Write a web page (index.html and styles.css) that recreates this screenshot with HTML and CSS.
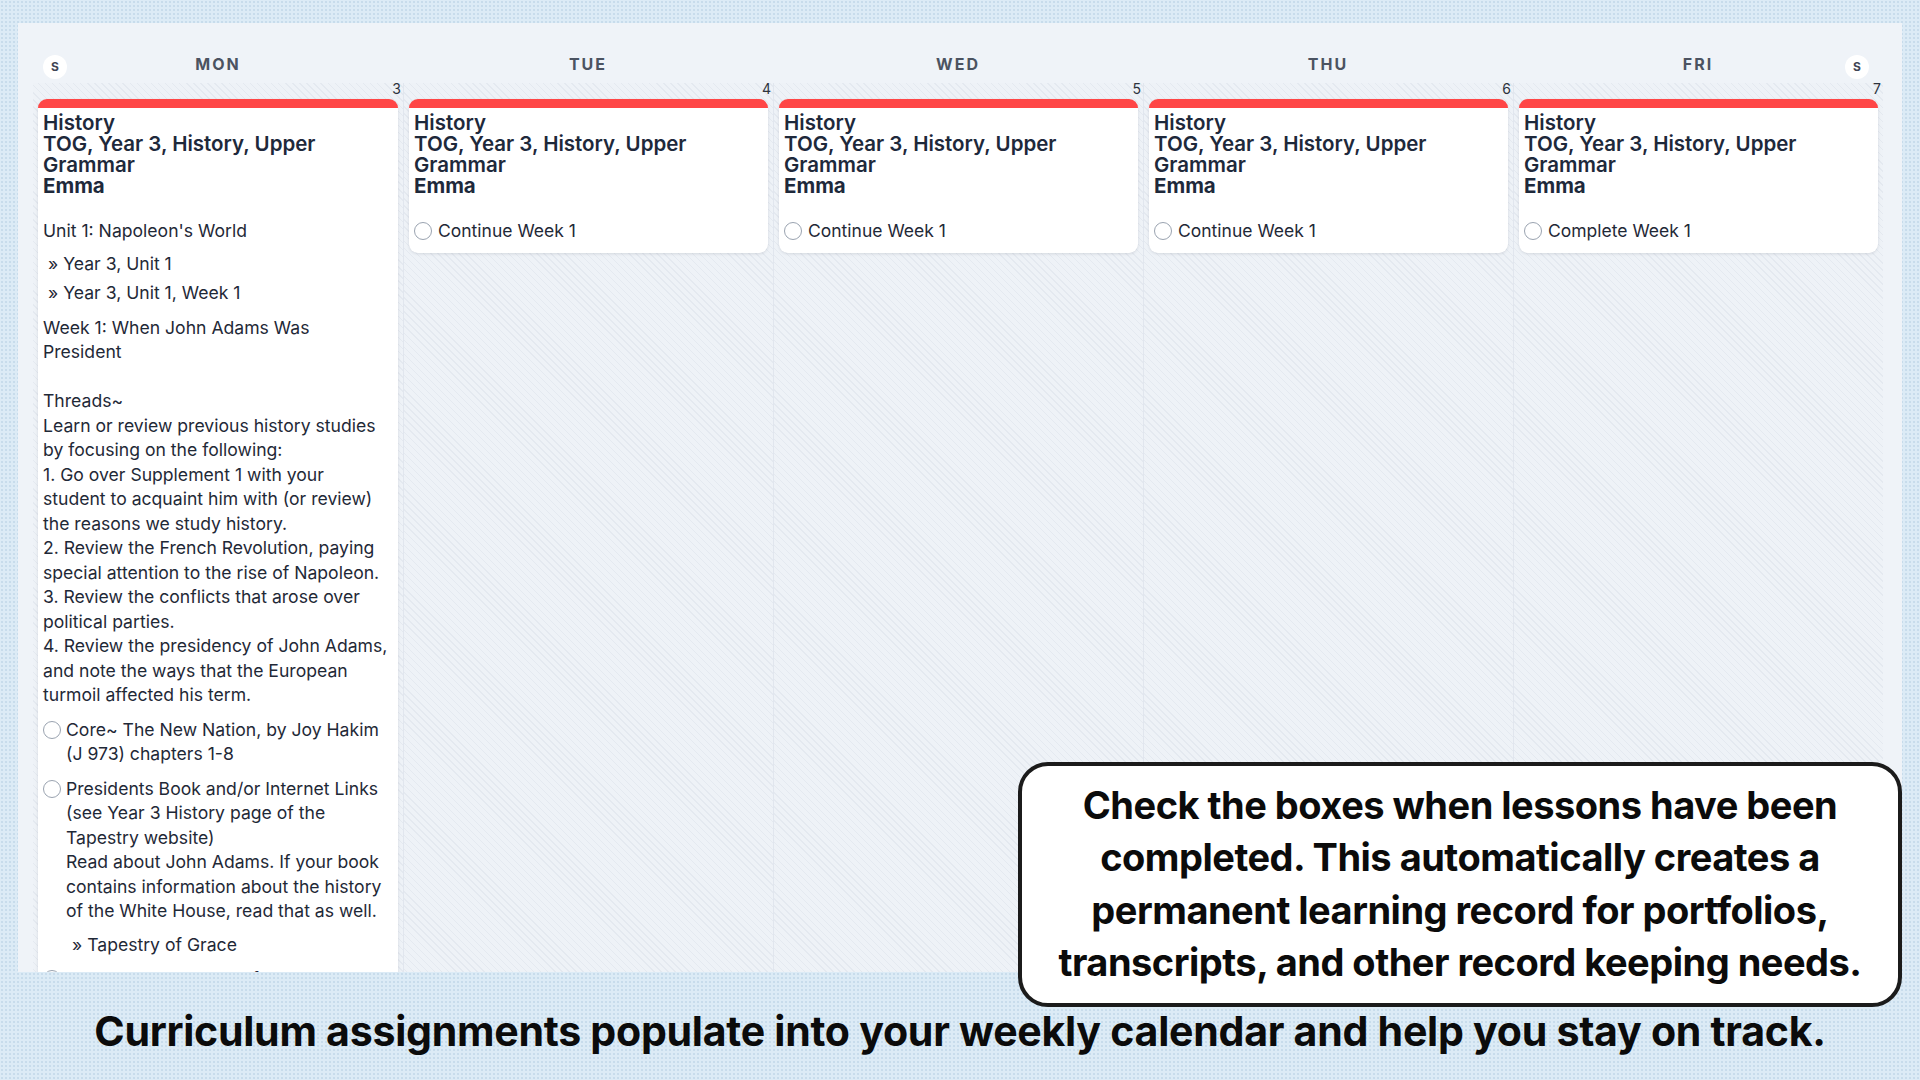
FILE: index.html
```html
<!DOCTYPE html>
<html lang="en">
<head>
  <meta charset="UTF-8" />
  <meta name="viewport" content="width=device-width, initial-scale=1.0" />
  <title>Weekly Planner</title>
  <link rel="stylesheet" href="styles.css">
</head>
<body>

  <!-- Week view -->
  <div class="calendar">
    <div class="week-head">
      <div class="day-name">MON<span class="weekend-btn left">S</span></div>
      <div class="day-name">TUE</div>
      <div class="day-name">WED</div>
      <div class="day-name">THU</div>
      <div class="day-name">FRI<span class="weekend-btn right">S</span></div>
    </div>

    <div class="week-body">
      <div class="day">
        <div class="date">3</div>
        <div class="card">
          <div class="card-title">History<br>TOG, Year 3, History, Upper Grammar<br><span class="student">Emma</span></div>
          <div class="card-body">
            <p class="unit">Unit 1: Napoleon's World</p>
            <p class="link">&raquo; Year 3, Unit 1</p>
            <p class="link next">&raquo; Year 3, Unit 1, Week 1</p>
            <p class="notes">Week 1: When John Adams Was President<br><br>Threads~<br>Learn or review previous history studies by focusing on the following:<br>1. Go over Supplement 1 with your student to acquaint him with (or review) the reasons we study history.<br>2. Review the French Revolution, paying special attention to the rise of Napoleon.<br>3. Review the conflicts that arose over political parties.<br>4. Review the presidency of John Adams, and note the ways that the European turmoil affected his term.</p>
            <div class="task">
              <span class="check"></span>
              <span>Core~ The New Nation, by Joy Hakim (J 973) chapters 1-8</span>
            </div>
            <div class="task">
              <span class="check"></span>
              <span>Presidents Book and/or Internet Links (see Year 3 History page of the Tapestry website)<br>Read about John Adams. If your book contains information about the history of the White House, read that as well.</span>
            </div>
            <p class="link sub">&raquo; Tapestry of Grace</p>
            <div class="task">
              <span class="check"></span>
              <span>In-Depth~ The Story of Napoleon Bonaparte</span>
            </div>
          </div>
        </div>
      </div>

      <div class="day">
        <div class="date">4</div>
        <div class="card">
          <div class="card-title">History<br>TOG, Year 3, History, Upper Grammar<br><span class="student">Emma</span></div>
          <div class="task short"><span class="check"></span><span>Continue Week 1</span></div>
        </div>
      </div>

      <div class="day">
        <div class="date">5</div>
        <div class="card">
          <div class="card-title">History<br>TOG, Year 3, History, Upper Grammar<br><span class="student">Emma</span></div>
          <div class="task short"><span class="check"></span><span>Continue Week 1</span></div>
        </div>
      </div>

      <div class="day">
        <div class="date">6</div>
        <div class="card">
          <div class="card-title">History<br>TOG, Year 3, History, Upper Grammar<br><span class="student">Emma</span></div>
          <div class="task short"><span class="check"></span><span>Continue Week 1</span></div>
        </div>
      </div>

      <div class="day">
        <div class="date">7</div>
        <div class="card">
          <div class="card-title">History<br>TOG, Year 3, History, Upper Grammar<br><span class="student">Emma</span></div>
          <div class="task short"><span class="check"></span><span>Complete Week 1</span></div>
        </div>
      </div>
    </div>
  </div>

  <!-- Callout -->
  <div class="callout">
    Check the boxes when lessons have been completed. This automatically creates a permanent learning record for portfolios, transcripts, and other record keeping needs.
  </div>

  <p class="caption">Curriculum assignments populate into your weekly calendar and help you stay on track.</p>

</body>
</html>
```

FILE: styles.css
```css
* {
  margin: 0;
  padding: 0;
  box-sizing: border-box;
  font-family: Inter, "Noto Sans", sans-serif;
}

body {
  position: relative;
  width: 1920px;
  height: 1080px;
  overflow: hidden;
  background-color: #dcebf6;
  background-image: radial-gradient(rgba(160, 190, 215, 0.35) 0.7px, transparent 0.9px);
  background-size: 4px 4px;
  padding-top: 23px;
}

/* Calendar panel */
.calendar {
  margin: 0 18px;
  height: 949px;
  background: #eff3f8;
  padding: 0 19px 0 15px;
  overflow: hidden;
}

.week-head {
  display: grid;
  grid-template-columns: repeat(5, 370px);
  height: 60px;
}

.day-name {
  position: relative;
  text-align: center;
  padding-top: 31px;
  font-size: 16px;
  font-weight: 700;
  letter-spacing: 2px;
  color: #4b5361;
}

.weekend-btn {
  position: absolute;
  top: 32px;
  width: 24px;
  height: 24px;
  border-radius: 50%;
  background: #fff;
  font-size: 12px;
  font-weight: 700;
  letter-spacing: 0;
  line-height: 24px;
  color: #3f4654;
}

.weekend-btn.left { left: 10px; }
.weekend-btn.right { right: 14px; }

.week-body {
  display: grid;
  grid-template-columns: repeat(5, 370px);
  height: 900px;
}

.day {
  padding: 0 5px;
  border-left: 1px solid #e1e6ee;
  background-color: #eef2f7;
  background-image: repeating-linear-gradient(45deg, transparent 0 4px, #e4e9f0 4px 5px);
}

.day:first-child { border-left: none; }

.date {
  text-align: right;
  font-size: 14px;
  line-height: 16px;
  height: 16px;
  margin-top: -2px;
  margin-bottom: 2px;
  margin-right: -3px;
  color: #2d333d;
}

/* Lesson card */
.card {
  background: #fff;
  border-top: 9px solid #ff4646;
  border-radius: 9px;
  box-shadow: 0 1px 3px rgba(30, 41, 59, 0.12);
  padding: 4px 8px 9px 5px;
  color: #1f2937;
}

.card-title {
  font-size: 20.5px;
  font-weight: 600;
  line-height: 21px;
  color: #1e293b;
}

.student {
  font-weight: 700;
}

.card-body {
  margin-top: 23px;
  font-size: 17.6px;
  line-height: 24.5px;
}

.link {
  margin-top: 8px;
  padding-left: 5px;
}

.link.next {
  margin-top: 5px;
}

.link.sub {
  padding-left: 29px;
  margin-top: 9px;
}

.notes {
  margin-top: 10px;
}

.task {
  display: flex;
  gap: 5px;
  margin-top: 10px;
}

.check {
  flex: none;
  width: 18px;
  height: 18px;
  margin-top: 3px;
  border: 1.5px solid #9aa3b0;
  border-radius: 50%;
  background: #fff;
}

.task.short {
  margin-top: 23px;
  font-size: 17.5px;
  line-height: 24.5px;
  gap: 6px;
}

/* Overlay note */
.callout {
  position: absolute;
  left: 1018px;
  top: 762px;
  width: 884px;
  height: 245px;
  border: 4px solid #1b1b1b;
  border-radius: 30px;
  background: #fff;
  display: flex;
  align-items: center;
  justify-content: center;
  text-align: center;
  padding: 0 20px 2px;
  font-size: 38px;
  font-weight: 700;
  line-height: 52.5px;
  letter-spacing: -0.5px;
  color: #0b0b0b;
}

.caption {
  text-align: center;
  padding-top: 5px;
  font-size: 41.1px;
  font-weight: 700;
  line-height: 108px;
  letter-spacing: -0.28px;
  color: #0b0b0b;
}
```
